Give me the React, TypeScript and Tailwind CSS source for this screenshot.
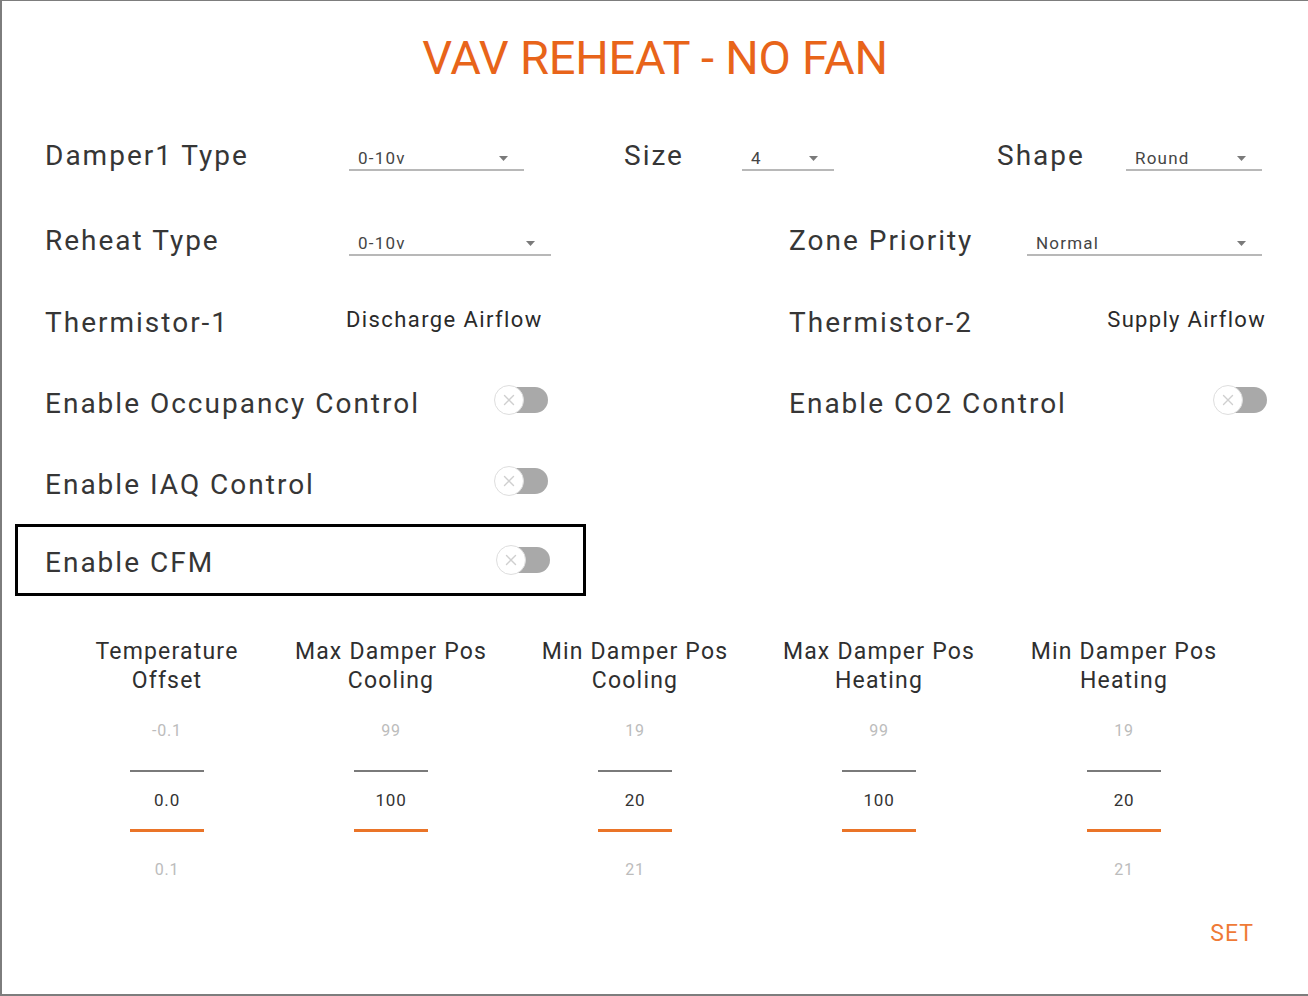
import React from "react";

const ORANGE = "text-[#e8641a]";

const Arrow: React.FC = () => (
  <svg width="9" height="5" viewBox="0 0 9 5" className="shrink-0">
    <path d="M0 0 L9 0 L4.5 5 Z" fill="#7a7a7a" />
  </svg>
);

const Select: React.FC<{ value: string; width: string }> = ({ value, width }) => (
  <div className={`${width} h-[30px] flex items-end justify-between border-b-2 border-[#b8b8b8] pl-[9px] pr-[16px] pb-[1px]`}>
    <span className="text-[17px] leading-[20px] tracking-[1.2px] text-[#454545]">{value}</span>
    <span className="mb-[7px]">
      <Arrow />
    </span>
  </div>
);

const Toggle: React.FC<{ className?: string }> = ({ className = "" }) => (
  <div className={`relative w-[54px] h-[30px] shrink-0 ${className}`}>
    <div className="absolute left-[2px] right-0 top-[2px] bottom-[2px] rounded-full bg-[#a9a9a9]" />
    <div className="absolute left-0 top-0 w-[30px] h-[30px] rounded-full bg-white border border-[#dedede] flex items-center justify-center">
      <svg width="12" height="12" viewBox="0 0 12 12">
        <path d="M1.5 1.5 L10.5 10.5 M10.5 1.5 L1.5 10.5" stroke="#cfcfcf" strokeWidth="1.4" strokeLinecap="round" />
      </svg>
    </div>
  </div>
);

const Label: React.FC<{ children: React.ReactNode; className?: string }> = ({ children, className = "" }) => (
  <span className={`text-[28px] leading-none tracking-[2px] text-[#363636] whitespace-nowrap ${className}`}>
    {children}
  </span>
);

interface Picker {
  title: [string, string];
  prev: string;
  value: string;
  next: string;
  ml: string;
}

const pickers: Picker[] = [
  { title: ["Temperature", "Offset"], prev: "-0.1", value: "0.0", next: "0.1", ml: "ml-0" },
  { title: ["Max Damper Pos", "Cooling"], prev: "99", value: "100", next: "", ml: "ml-[24px]" },
  { title: ["Min Damper Pos", "Cooling"], prev: "19", value: "20", next: "21", ml: "ml-[44px]" },
  { title: ["Max Damper Pos", "Heating"], prev: "99", value: "100", next: "", ml: "ml-[44px]" },
  { title: ["Min Damper Pos", "Heating"], prev: "19", value: "20", next: "21", ml: "ml-[45px]" },
];

const PickerColumn: React.FC<{ p: Picker }> = ({ p }) => (
  <div className={`w-[200px] flex flex-col items-center ${p.ml}`}>
    <div className="text-[23px] leading-[29px] tracking-[1.2px] text-[#2f2f2f] text-center whitespace-nowrap">
      {p.title[0]}
      <br />
      {p.title[1]}
    </div>
    <div className="mt-[16px] h-[40px] flex items-center text-[16px] tracking-[0.8px] text-[#bcbcbc]">{p.prev}</div>
    <div className="mt-[19px] w-[74px] h-[2px] bg-[#7a7a7a]" />
    <div className="h-[57px] flex items-center text-[17px] tracking-[0.8px] text-[#333]">{p.value}</div>
    <div className="w-[74px] h-[3px] bg-[#ea7428]" />
    <div className="h-[76px] flex items-center text-[16px] tracking-[0.8px] text-[#bcbcbc]">{p.next}</div>
  </div>
);

export default function App() {
  return (
    <div
      className="w-[1308px] h-[996px] bg-white border-l-2 border-t border-b-2 border-[#7d7d7d] overflow-hidden"
      style={{ fontFamily: "Roboto, 'Noto Sans', sans-serif" }}
    >
      {/* title */}
      <div className="h-[113px] flex items-center justify-center">
        <h1 className={`text-[47px] leading-none tracking-[-0.2px] ${ORANGE}`}>VAV REHEAT - NO FAN</h1>
      </div>

      {/* row 1 */}
      <div className="h-[84px] flex items-center pl-[43px]">
        <Label className="w-[304px]">Damper1 Type</Label>
        <Select value="0-10v" width="w-[175px]" />
        <Label className="ml-[100px] w-[118px]">Size</Label>
        <Select value="4" width="w-[92px]" />
        <Label className="ml-[163px] w-[129px]">Shape</Label>
        <Select value="Round" width="w-[136px]" />
      </div>

      {/* row 2 */}
      <div className="h-[86px] flex items-center pl-[43px]">
        <Label className="w-[304px]">Reheat Type</Label>
        <Select value="0-10v" width="w-[202px]" />
        <Label className="ml-[238px] w-[238px]">Zone Priority</Label>
        <Select value="Normal" width="w-[235px]" />
      </div>

      {/* row 3 */}
      <div className="h-[78px] flex items-center pl-[43px]">
        <div className="w-[744px] flex items-center">
          <Label className="w-[301px]">Thermistor-1</Label>
          <span className="text-[22px] tracking-[1.4px] text-[#2a2a2a] -mt-[8px]">Discharge Airflow</span>
        </div>
        <div className="w-[477px] flex items-center justify-between">
          <Label>Thermistor-2</Label>
          <span className="text-[22px] tracking-[1.3px] text-[#2a2a2a] -mt-[8px]">Supply Airflow</span>
        </div>
      </div>

      {/* row 4 */}
      <div className="h-[83px] flex items-center pl-[43px]">
        <div className="w-[744px] flex items-center">
          <Label className="w-[449px]">Enable Occupancy Control</Label>
          <Toggle className="-mt-[8px]" />
        </div>
        <div className="w-[478px] flex items-center justify-between">
          <Label>Enable CO2 Control</Label>
          <Toggle className="-mt-[8px]" />
        </div>
      </div>

      {/* row 5 */}
      <div className="h-[79px] flex items-center pl-[43px]">
        <Label className="w-[449px]">Enable IAQ Control</Label>
        <Toggle className="-mt-[8px]" />
      </div>

      {/* row 6, highlighted */}
      <div className="ml-[13px] w-[571px] h-[72px] border-[3px] border-black flex items-center justify-between pl-[27px] pr-[33px]">
        <Label className="mt-[5px]">Enable CFM</Label>
        <Toggle />
      </div>

      {/* pickers */}
      <div className="mt-[41px] flex pl-[65px]">
        {pickers.map((p, i) => (
          <PickerColumn key={i} p={p} />
        ))}
      </div>

      <div className="h-[52px] flex items-center justify-end pr-[54px]">
        <span className="text-[23px] tracking-[1px] text-[#ef7a36]">SET</span>
      </div>
    </div>
  );
}
